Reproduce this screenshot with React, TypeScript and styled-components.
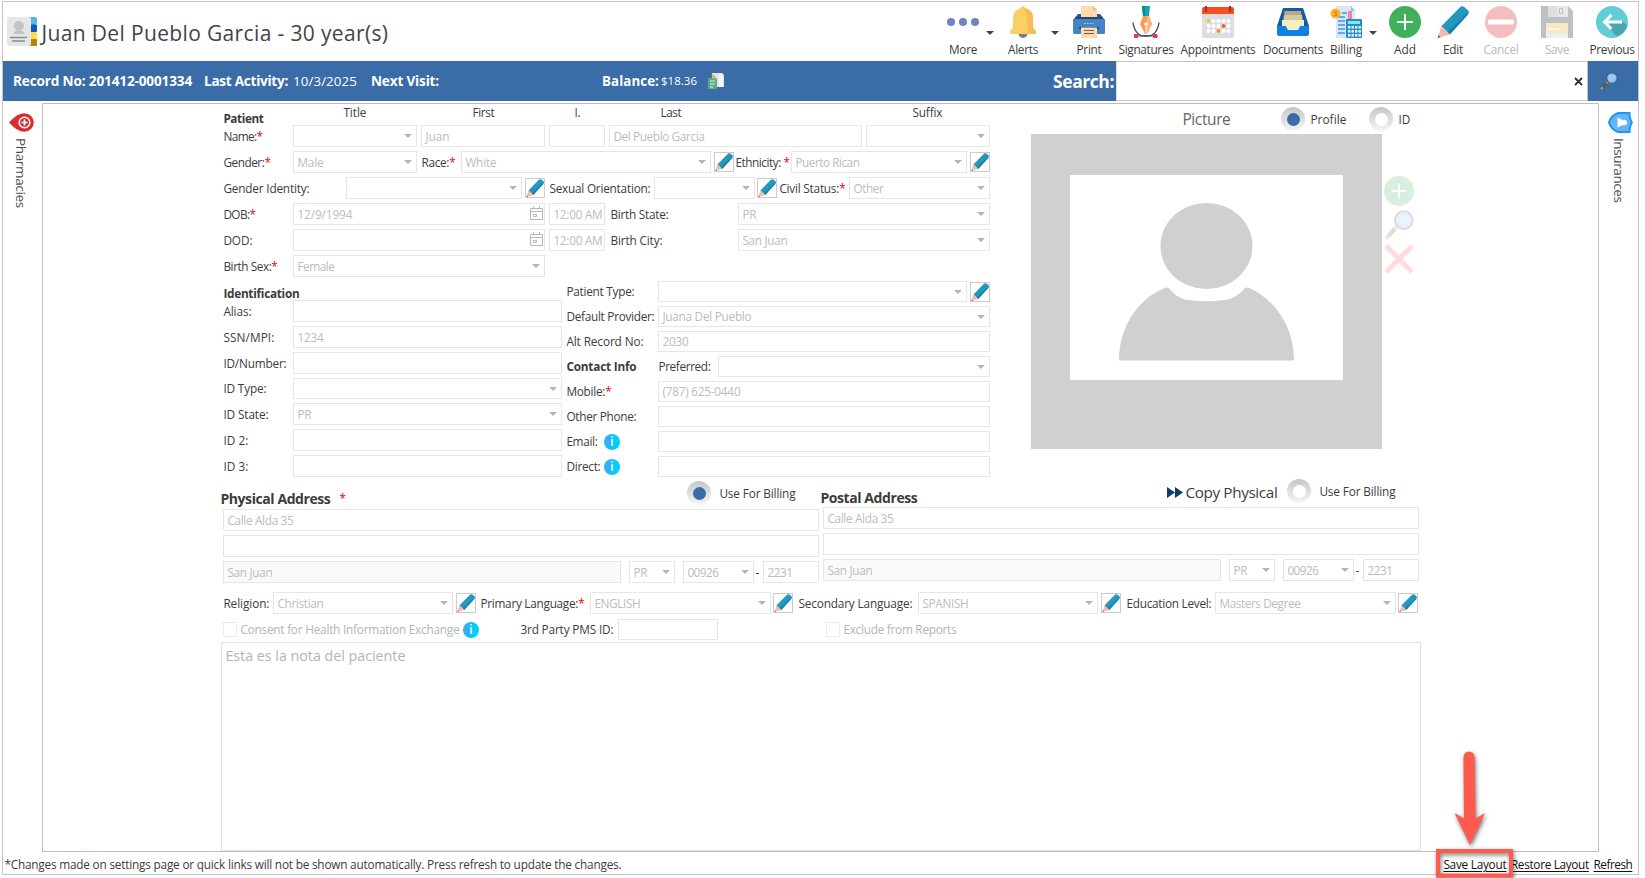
import React, { useLayoutEffect, useRef, useState } from "react";
import styled, { createGlobalStyle } from "styled-components";

const Global = createGlobalStyle`
  * { box-sizing: border-box; }
  body { margin: 0; background: #fff; overflow: hidden; }
  body, input, button { font-family: "Open Sans", "Noto Sans", sans-serif; }
`;

/* ---------- text ---------- */

const TextSpan = styled.span<{ $size: number; $bold?: boolean; $color: string; $underline?: boolean }>`
  display: inline-block;
  flex: none;
  margin-left: -0.6px;
  margin-right: 0.6px;
  white-space: pre;
  font-size: ${(p) => p.$size}px;
  line-height: 16px;
  font-weight: ${(p) => (p.$bold ? 700 : 400)};
  color: ${(p) => p.$color};
  text-decoration: ${(p) => (p.$underline ? "underline" : "none")};
  text-underline-offset: 2px;
`;

const Star = styled.span`
  color: #f00000;
`;

type TextProps = {
  w: number;
  size?: number;
  bold?: boolean;
  color?: string;
  underline?: boolean;
  children: React.ReactNode;
};

/* Tracks a caption in or out so that it fills the width reserved for it. */
function Text({ w, size = 11.8, bold, color = "#3c3c3c", underline, children }: TextProps) {
  const ref = useRef<HTMLSpanElement>(null);
  const [spacing, setSpacing] = useState(0);
  useLayoutEffect(() => {
    const el = ref.current;
    if (!el) return;
    el.style.letterSpacing = "0px";
    const n = (el.textContent || "").length || 1;
    setSpacing((w - el.getBoundingClientRect().width) / n);
  }, [w, size]);
  return (
    <TextSpan ref={ref} $size={size} $bold={bold} $color={color} $underline={underline} style={{ letterSpacing: `${spacing}px` }}>
      {children}
    </TextSpan>
  );
}

/* ---------- form parts ---------- */

const Row = styled.div<{ $h?: number }>`
  display: flex;
  align-items: center;
  height: ${(p) => p.$h ?? 22}px;
  margin-bottom: 4px;
  ${TextSpan} { margin-top: ${(p) => (p.$h === 21 ? -1 : 0)}px; }
`;

const Slot = styled.div<{ $w?: number; $ml?: number; $mt?: number }>`
  flex: none;
  display: flex;
  align-items: center;
  width: ${(p) => (p.$w ? `${p.$w}px` : "auto")};
  margin-left: ${(p) => p.$ml ?? 0}px;
  margin-top: ${(p) => p.$mt ?? 0}px;
`;

const Box = styled.div<{ $w: number; $ml?: number; $shade?: boolean }>`
  flex: none;
  align-self: stretch;
  display: flex;
  align-items: center;
  justify-content: space-between;
  width: ${(p) => p.$w}px;
  margin-left: ${(p) => p.$ml ?? 0}px;
  padding: 0 4px;
  border: 1px solid #e6e6e6;
  background: ${(p) => (p.$shade ? "#fafafa" : "#fff")};
`;

const Caret = styled.i<{ $dark?: boolean }>`
  flex: none;
  margin-left: auto;
  border: 4px solid transparent;
  border-bottom: 0;
  border-top-color: ${(p) => (p.$dark ? "#444" : "#b4b4b4")};
`;

type FieldProps = { w: number; ml?: number; v?: string; vw?: number; sel?: boolean; cal?: boolean; shade?: boolean };

function Field({ w, ml, v, vw = 0, sel, cal, shade }: FieldProps) {
  return (
    <Box $w={w} $ml={ml} $shade={shade}>
      {v && <Text w={vw} color="#bcbcbc">{v}</Text>}
      {sel && <Caret />}
      {cal && <CalendarGlyph />}
    </Box>
  );
}

const CalSvg = styled.svg`
  flex: none;
  margin: 0 -3px 2px auto;
`;

const CalendarGlyph = () => (
  <CalSvg width="13" height="14" viewBox="0 0 13 14" fill="none" stroke="#b8b8b8">
    <path d="M.5 2.5h12v11H.5zM.5 5.5h12M3.5 0v3M9.500 0v3M3.500 8.500h3v2h-3z" />
  </CalSvg>
);

const Label = ({ w, slot, ml, bold, star, children }: { w: number; slot?: number; ml?: number; bold?: boolean; star?: string; children: string }) => (
  <Slot $w={slot} $ml={ml}>
    <Text w={w} bold={bold}>
      {children}
      {star && <Star>{star}</Star>}
    </Text>
  </Slot>
);

const PencilButton = styled.div<{ $ml?: number; $w?: number }>`
  flex: none;
  width: ${(p) => p.$w ?? 20}px;
  height: 20px;
  margin-left: ${(p) => p.$ml ?? 3}px;
  border: 1px solid #ccc;
  display: flex;
  align-items: center;
  justify-content: flex-start;
`;

const Pencil = ({ size }: { size: number }) => (
  <svg width={size} height={size} viewBox="0 0 32 32">
    <path d="M22.500 1.800Q24.800-.6 27.300 1L31 4.200Q33 6.300 30.700 8.800L12.700 28.600 4.300 20.300z" fill="#2497bf" />
    <path d="M30 7.500L31 8.500 12.700 28.600 10.300 26.200z" fill="#177fa6" />
    <path d="M4.500 20L13 28.400.6 32z" fill="#f6b9ab" />
    <path d="M1.600 29.300L3.600 31.200.6 32z" fill="#5a5460" />
  </svg>
);

const Edit = ({ ml, w }: { ml?: number; w?: number }) => (
  <PencilButton $ml={ml} $w={w}>
    <Pencil size={18} />
  </PencilButton>
);

const Info = styled.div<{ $ml?: number }>`
  flex: none;
  width: 16px;
  height: 16px;
  margin-left: ${(p) => p.$ml ?? 0}px;
  border-radius: 50%;
  background: linear-gradient(100deg, #2fb2f2 0 40%, #00ccff 60%);
  color: #fff;
  font: 600 12px/15px "Open Sans", sans-serif;
  text-align: center;
`;

const Radio = styled.div<{ $on?: boolean; $ml?: number; $mt?: number }>`
  flex: none;
  width: 24px;
  height: 24px;
  margin-left: ${(p) => p.$ml ?? 0}px;
  margin-top: ${(p) => p.$mt ?? 0}px;
  border-radius: 50%;
  background: linear-gradient(#c6c6c6, #f6f6f6);
  display: flex;
  align-items: center;
  justify-content: center;
  &::before {
    content: "";
    width: 13px;
    height: 13px;
    border-radius: 50%;
    background: ${(p) => (p.$on ? "#3a6ca8" : "#fff")};
  }
`;

const Check = styled.div<{ $ml?: number }>`
  flex: none;
  width: 14px;
  height: 15px;
  margin-left: ${(p) => p.$ml ?? 0}px;
  border: 1px solid #ececec;
`;

/* ---------- page frame ---------- */

const Page = styled.div`
  width: 1645px;
  height: 878px;
  padding: 1px 0 0 2px;
`;

const Frame = styled.div`
  position: relative;
  width: 1637px;
  height: 874px;
  border: 1px solid #c4c4c4;
  display: flex;
  flex-direction: column;
`;

const Header = styled.header`
  flex: none;
  height: 59px;
  display: flex;
  align-items: flex-start;
`;

const Title = styled.h1`
  margin: 0;
  width: 901px;
  padding: 15px 0 0 4px;
  font-weight: 400;
  line-height: 0;
  display: flex;
  align-items: center;
  gap: 5px;
`;

const TitleText = styled.div`
  display: flex;
  align-items: center;
  height: 30px;
  padding-top: 2px;
`;

const Tool = styled.div<{ $w: number; $ml?: number; $off?: boolean }>`
  flex: none;
  width: ${(p) => p.$w}px;
  margin-left: ${(p) => p.$ml ?? 0}px;
  padding-top: 4px;
  display: flex;
  flex-direction: column;
  align-items: center;
  gap: 3px;
  > svg { opacity: ${(p) => (p.$off ? 0.38 : 1)}; }
  ${TextSpan} { margin-left: 0; margin-right: 0; }
`;

const ToolCaret = styled.div`
  flex: none;
  width: 14px;
  padding: 29px 3px 0;
  display: flex;
`;

const BlueBar = styled.div`
  flex: none;
  height: 40px;
  display: flex;
  align-items: center;
  padding-left: 10px;
  background: #3a6ca8;
  ${TextSpan} { margin-left: 0; margin-right: 0; }
`;

const SearchBox = styled.div`
  flex: none;
  align-self: stretch;
  width: 472px;
  margin-left: 2px;
  border: 1px solid #c4c4c4;
  border-left-color: #dadada;
  background: #fff;
  display: flex;
  align-items: center;
  justify-content: flex-end;
  padding-right: 4px;
`;

const Body = styled.div`
  flex: none;
  height: 751px;
  padding-top: 2px;
  display: flex;
`;

const Side = styled.aside<{ $w: number }>`
  flex: none;
  width: ${(p) => p.$w}px;
  padding-top: 7px;
  display: flex;
  flex-direction: column;
  align-items: center;
`;

const Vertical = styled.div<{ $left?: boolean }>`
  margin-top: ${(p) => (p.$left ? 6 : 5)}px;
  margin-right: ${(p) => (p.$left ? 3 : 0)}px;
  writing-mode: vertical-rl;
  font: 13.500px/18px "Open Sans", sans-serif;
  letter-spacing: ${(p) => (p.$left ? -0.35 : -0.4)}px;
  color: #505050;
`;

const Panel = styled.main`
  flex: none;
  width: 1557px;
  height: 749px;
  border: 1px solid #bdbdbd;
  padding-left: 178px;
`;

const Top = styled.div`
  display: flex;
  height: 373px;
`;

const Patient = styled.section`
  width: 769px;
  padding-left: 3px;
  flex: none;
`;

const HeadRow = styled.div`
  display: flex;
  align-items: flex-start;
  height: 21px;
`;

const Columns = styled.div`
  display: flex;
`;

const Column = styled.div<{ $w: number; $ml?: number }>`
  flex: none;
  width: ${(p) => p.$w}px;
  margin-left: ${(p) => p.$ml ?? 0}px;
`;

const SubHead = styled.div`
  display: flex;
  align-items: flex-start;
  height: 19px;
  padding-top: 4px;
`;

const PictureArea = styled.section`
  margin-left: 41px;
  width: 384px;
`;

const PictureHead = styled.div`
  display: flex;
  align-items: center;
  height: 30px;
  padding-left: 152px;
`;

const Photo = styled.div`
  width: 351px;
  height: 315px;
  padding: 41px 39px 69px 39px;
  background: #d0d0d0;
`;

const PhotoTools = styled.div`
  display: flex;
  flex-direction: column;
  align-items: center;
  padding: 42px 0 0 2px;
  gap: 4px;
  opacity: 0.2;
`;

const Address = styled.section<{ $ml?: number }>`
  width: 596px;
  flex: none;
  margin-left: ${(p) => p.$ml ?? 2}px;
`;

const AddressHead = styled.div<{ $h: number }>`
  display: flex;
  align-items: flex-start;
  height: ${(p) => p.$h}px;
  margin-left: -2px;
`;

const Addresses = styled.div`
  display: flex;
  height: 115px;
`;

const Details = styled.div<{ $h: number; $mb: number; $pl: number }>`
  display: flex;
  align-items: center;
  height: ${(p) => p.$h}px;
  margin-bottom: ${(p) => p.$mb}px;
  padding-left: ${(p) => p.$pl}px;
  ${TextSpan} { margin-top: ${(p) => (p.$h === 21 ? -1 : 0)}px; }
`;

const Note = styled.div`
  display: flex;
  align-items: flex-start;
  width: 1200px;
  height: 209px;
  border: 1px solid #e2e2e2;
  padding: 5px 4px;
`;

const Footer = styled.footer`
  flex: 1;
  display: flex;
  align-items: center;
  padding: 2px 5px 0 2px;
`;

const Links = styled.nav`
  margin-left: auto;
  display: flex;
  gap: 4.500px;
`;

const Callout = styled.svg`
  position: absolute;
  left: 1427px;
  top: 744px;
  overflow: visible;
`;

const Marker = styled.g`
  fill: #ff5a4c;
  filter: drop-shadow(1px 2px 2px rgba(0, 0, 0, 0.55));
`;

/* ---------- drawings ---------- */

const ContactIcon = () => (
  <svg width="30" height="30" viewBox="0 0 30 30">
    <rect x="22" y="0" width="8" height="8" rx="2" fill="#5bb4e5" />
    <rect x="22" y="7.500" width="8" height="7.500" rx="1" fill="#0c5cb5" />
    <rect x="22" y="15" width="8" height="7" rx="1" fill="#ffdb4d" />
    <rect x="22" y="22" width="8" height="7" rx="1" fill="#b58600" />
    <rect width="24" height="29" rx="2" fill="#e6e6e8" />
    <circle cx="12" cy="9" r="5" fill="#c0c5ca" />
    <path d="M6 17q1-3 4-3.500h4q3 .5 4 3.500z" fill="#c0c5ca" />
    <path d="M3 20.500h17M5 24h13" stroke="#868d94" strokeWidth="1.500" />
  </svg>
);

const MoreIcon = () => (
  <svg width="32" height="32" viewBox="0 0 32 32" fill="#7383bf">
    <circle cx="4" cy="16" r="4" /><circle cx="16" cy="16" r="4" /><circle cx="28" cy="16" r="4" />
  </svg>
);

const BellIcon = () => (
  <svg width="32" height="32" viewBox="0 0 32 32">
    <path d="M11 26h10a5 6 0 0 1-10 0z" fill="#71808f" />
    <path d="M16 0q2 0 2 2 8 1.500 8 11v8q0 2 3 4v3H3v-3q3-2 3-4v-8q0-9.500 8-11 0-2 2-2z" fill="#fbcf63" />
    <path d="M17 2q9 1.500 9 11v8q0 2 3 4v3h-8q-1-4-1-12 0-9-3-14z" fill="#f4bd55" />
  </svg>
);

const PrintIcon = () => (
  <svg width="32" height="32" viewBox="0 0 32 32">
    <path d="M5 8h22l5 6v3H0v-3z" fill="#2c5a85" />
    <rect y="13" width="32" height="15" rx="1.500" fill="#4583c4" />
    <path d="M8 0h12l4 4v9H8z" fill="#ffd9b0" /><path d="M20 0v4h4z" fill="#e6b98e" />
    <path d="M3 13h26v-2H3z" fill="#24496e" />
    <path d="M11 17.500h10" stroke="#a5c7ea" strokeDasharray="2 1" />
    <path d="M6 22h20" stroke="#24496e" strokeWidth="2" />
    <path d="M8 21.500h16V32H8z" fill="#ffd9b0" /><path d="M11 24.500h10M11 27.500h10" stroke="#6f5b4b" />
  </svg>
);

const SignIcon = () => (
  <svg width="32" height="32" viewBox="0 0 32 32">
    <path d="M3 16.500Q5 30 15 30h2q10 0 12-13.500" fill="none" stroke="#34465a" strokeWidth="1.300" />
    <path d="M4 30h24" stroke="#34465a" />
    <path d="M12 0h8l-1 10h-6z" fill="#14a3b4" /><path d="M12 0h3v10h-2z" fill="#0a8798" />
    <path d="M13 10h6l3 8-5 10h-2l-5-10z" fill="#fb9851" /><path d="M17 10h2l3 8-5 10h-1z" fill="#fdb67e" />
    <path d="M16 20v8" stroke="#fff" /><circle cx="16" cy="18" r="1.700" fill="#fff" />
    <path d="M4 28h4v4H4zM23 28h4v4h-4z" fill="#e63946" />
  </svg>
);

const ApptIcon = () => (
  <svg width="32" height="32" viewBox="0 0 32 32">
    <rect y="1" width="32" height="31" rx="2" fill="#dcdee3" />
    <path d="M0 8V3q0-2 2-2h28q2 0 2 2v5z" fill="#fc4f20" />
    <path d="M4 1v4M28 1v4" stroke="#8d3b35" strokeWidth="2.400" strokeLinecap="round" />
    {[15, 20, 25].map((y) => [6.500, 11.500, 16.500, 21.500, 26.500].map((x) => <circle key={`${x}-${y}`} cx={x} cy={y} r="2" fill="#fff" />))}
    <circle cx="6.500" cy="15" r="2" fill="#fcc419" /><circle cx="21.500" cy="20" r="2" fill="#fa5430" /><circle cx="16.500" cy="25" r="2" fill="#f99312" />
  </svg>
);

const DocsIcon = () => (
  <svg width="32" height="32" viewBox="0 0 32 32">
    <path d="M6 2h20l6 18H0z" fill="#115ea3" />
    <path d="M7.500 5h16.500l1 7H7z" fill="#b9a880" /><path d="M7 9h18l1 8H6z" fill="#dbc79c" />
    <path d="M5 14h22v9H5z" fill="#f5edc5" />
    <path d="M0 20h9q1 4 3 4h8q2 0 3-4h9v8q0 2-2 2H2q-2 0-2-2z" fill="#1180e0" />
  </svg>
);

const BillIcon = () => (
  <svg width="32" height="32" viewBox="0 0 32 32">
    <path d="M6 0h15l4 4v28H6z" fill="#d3e8fb" /><path d="M21 0l4 5h-4z" fill="#98bfe8" />
    <path d="M8 11h7M8 15h7M8 19h7M8 23h7M8 27h7M12 7h5" stroke="#4a90e2" strokeWidth="1.500" />
    <path d="M18 5h4v8h-4z" fill="#f183a8" />
    <circle cx="5.500" cy="7.500" r="5" fill="#fbb225" /><path d="M7 5.500H5v2h2v2H4.500" stroke="#e07c12" fill="none" />
    <rect x="16" y="13" width="16" height="19" rx="1" fill="#1f8fc5" />
    <path d="M18 15h12v3H18z" fill="#8ee0f5" />
    {[20, 24, 28].map((y) => [18, 21.500, 25, 28.500].map((x) => <rect key={`${x}-${y}`} x={x} y={y} width="2.400" height="2.600" fill="#e8f6ff" />))}
  </svg>
);

const AddIcon = ({ size = 32 }: { size?: number }) => (
  <svg width={size} height={size} viewBox="0 0 32 32">
    <circle cx="16" cy="16" r="16" fill="#3fb15a" /><path d="M16 8v16M8 16h16" stroke="#fff" strokeWidth="2" />
  </svg>
);

const CancelIcon = () => (
  <svg width="32" height="32" viewBox="0 0 32 32">
    <circle cx="16" cy="16" r="16" fill="#e9545d" /><rect x="3" y="13.500" width="26" height="5" rx="1.500" fill="#fff" />
  </svg>
);

const SaveIcon = () => (
  <svg width="32" height="32" viewBox="0 0 32 32">
    <path d="M0 0h27l5 5v27H0z" fill="#555b6a" /><path d="M7 0h20v11H7z" fill="#bfc6cf" />
    <path d="M7 0h9v11H7z" fill="#a8afb8" />
    <path d="M18.500 2.500h3v5h-3z" stroke="#555b6a" fill="none" />
    <path d="M5 17h22v15H5z" fill="#f4c35c" /><path d="M5 27h22v5H5z" fill="#cfd3d8" /><path d="M8 23h10" stroke="#fff" strokeWidth="1.500" />
  </svg>
);

const BackIcon = () => (
  <svg width="32" height="32" viewBox="0 0 32 32">
    <circle cx="16" cy="16" r="16" fill="#62cdd6" />
    <path d="M8.500 17.500L21 30.500Q29 27 31.500 19L25 15z" fill="#4aa6b3" />
    <path d="M26 16H8.500M15.500 9L8.500 16l7 7" fill="none" stroke="#fff" strokeWidth="3" />
  </svg>
);

const Magnifier = ({ size }: { size: number }) => (
  <svg width={size} height={size} viewBox="0 0 28 28">
    <path d="M2 26.500L10.500 17" stroke="#555" strokeWidth="4" /><path d="M1.500 26.500l3-2.500M10 17.500l2-2" stroke="#b5a44a" strokeWidth="3" />
    <circle cx="18.500" cy="9.500" r="8.300" fill="#8fc3fb" stroke="#505a66" strokeWidth="2" />
    <path d="M14 11l6-6M17 13l6-6" stroke="#bcdcff" />
  </svg>
);

const MoneyIcon = () => (
  <svg width="18" height="18" viewBox="0 0 18 18">
    <path d="M5 1h10l2 2v12H5z" fill="#d8e6ef" /><path d="M12 2h4v13h-4z" fill="#f5f8fa" />
    <rect x="1" y="6" width="9" height="11" rx="1" fill="#58ad7d" /><path d="M3 9h5M3 12h5M3 15h3" stroke="#d9f3e3" />
    <path d="M5 3l4 4" stroke="#e8a84d" strokeWidth="2" />
  </svg>
);

const PharmacyIcon = () => (
  <svg width="25" height="19" viewBox="0 0 25 19">
    <path d="M0 9.500Q8 .3 15.500.2a9.300 9.300 0 0 1 0 18.600Q8 18.700 0 9.500z" fill="#d52f32" />
    <circle cx="15.500" cy="9.500" r="5.300" fill="none" stroke="#fff" strokeWidth="1.500" />
    <path d="M15.500 6.500v6M12.500 9.500h6" stroke="#fff" strokeWidth="1.700" />
  </svg>
);

const InsuranceIcon = () => (
  <svg width="25" height="21" viewBox="0 0 25 21">
    <path d="M1 10.500Q3 3.500 10 1h11.500Q21 5 23.800 10.500 21 16 21.500 20H10Q3 17.500 1 10.500z" fill="#64b5f6" stroke="#2196f3" strokeWidth="2" />
    <path d="M9.500 5.500l5 2.500q4.500-1 4.500 2.500t-4.500 2.500l-5 2.500z" fill="#fff" />
  </svg>
);

const Avatar = () => (
  <svg width="273" height="205" viewBox="0 0 273 205">
    <rect width="273" height="205" fill="#fff" />
    <ellipse cx="136.500" cy="71" rx="46" ry="43" fill="#d0d0d0" />
    <path d="M49 185.500C49 148 72 122 94.500 113q3-1.500 6 2C108 124 116 126 136.500 126S165 124 173 115q3-3.500 6-2C201 122 224 148 224 185.500z" fill="#d0d0d0" />
  </svg>
);

/* ---------- sections ---------- */

const tools: { label: string; lw: number; w: number; ml?: number; icon: React.ReactNode; caret?: boolean; off?: boolean; caretGap?: number }[] = [
  { label: "More", lw: 28, w: 40, ml: 39, icon: <MoreIcon />, caret: true },
  { label: "Alerts", lw: 30, w: 40, ml: 6, icon: <BellIcon />, caret: true, caretGap: 5 },
  { label: "Print", lw: 25, w: 40, ml: 7, icon: <PrintIcon /> },
  { label: "Signatures", lw: 55, w: 60, ml: 7, icon: <SignIcon /> },
  { label: "Appointments", lw: 75, w: 80, ml: 2, icon: <ApptIcon /> },
  { label: "Documents", lw: 60, w: 66, ml: 2, icon: <DocsIcon /> },
  { label: "Billing", lw: 32, w: 40, icon: <BillIcon />, caret: true },
  { label: "Add", lw: 22, w: 40, ml: 5, icon: <AddIcon /> },
  { label: "Edit", lw: 20, w: 40, ml: 8, icon: <Pencil size={32} /> },
  { label: "Cancel", lw: 35, w: 44, ml: 6, icon: <CancelIcon />, off: true },
  { label: "Save", lw: 24, w: 40, ml: 14, icon: <SaveIcon />, off: true },
  { label: "Previous", lw: 45, w: 50, ml: 10, icon: <BackIcon /> },
];

const CaretSlot = styled.div<{ $ml?: number }>`
  flex: none;
  margin-left: ${(p) => p.$ml ?? 0}px;
`;

const AddressLines = () => (
  <>
    <Row><Field w={596} v="Calle Alda 35" vw={66} /></Row>
    <Row><Field w={596} /></Row>
    <Row>
      <Field w={398} v="San Juan" vw={45} shade />
      <Field w={46} ml={8} v="PR" vw={14} sel />
      <Field w={71} ml={8} v="00926" vw={31} sel />
      <Slot $w={5} $ml={2}><Text w={5}>-</Text></Slot>
      <Field w={56} ml={2} v="2231" vw={25} />
    </Row>
  </>
);

export default function App() {
  return (
    <Page>
      <Global />
      <Frame>
        <Header>
          <Title>
            <ContactIcon />
            <TitleText><Text w={347} size={21} color="#444">Juan Del Pueblo Garcia - 30 year(s)</Text></TitleText>
          </Title>
          {tools.map((t) => (
            <React.Fragment key={t.label}>
              <Tool $w={t.w} $ml={t.ml} $off={t.off}>
                {t.icon}
                <Text w={t.lw} color={t.off ? "#b9b9b9" : "#3c3c3c"}>{t.label}</Text>
              </Tool>
              {t.caret && <CaretSlot $ml={t.caretGap}><ToolCaret><Caret $dark /></ToolCaret></CaretSlot>}
            </React.Fragment>
          ))}
        </Header>

        <BlueBar>
          <Text w={179} size={13.600} bold color="#fff">Record No: 201412-0001334</Text>
          <Slot $ml={12}><Text w={84} size={13.600} bold color="#fff">Last Activity:</Text></Slot>
          <Slot $ml={5}><Text w={64} size={13.300} color="#fff">10/3/2025</Text></Slot>
          <Slot $ml={14}><Text w={68} size={13.600} bold color="#fff">Next Visit:</Text></Slot>
          <Slot $ml={163}><Text w={57} size={13.300} bold color="#fff">Balance:</Text></Slot>
          <Slot $ml={2}><Text w={36} size={11.500} color="#fff">$18.36</Text></Slot>
          <Slot $ml={10}><MoneyIcon /></Slot>
          <Slot $ml={328}><Text w={61} size={17.500} bold color="#fff">Search:</Text></Slot>
          <SearchBox>
            <svg width="9" height="9" viewBox="0 0 9 9"><path d="M1 1l7 7M8 1L1 8" stroke="#333" strokeWidth="1.800" /></svg>
          </SearchBox>
          <Slot $ml={12}><Magnifier size={18} /></Slot>
        </BlueBar>

        <Body>
          <Side $w={39}>
            <Slot $ml={-2} $mt={3}><PharmacyIcon /></Slot>
            <Vertical $left>Pharmacies</Vertical>
          </Side>
          <Panel>
            <Top>
              <Patient>
                <HeadRow>
                  <Slot $w={120} $mt={6}><Text w={40} bold>Patient</Text></Slot>
                  <Slot $w={129}><Text w={23}>Title</Text></Slot>
                  <Slot $w={102}><Text w={22}>First</Text></Slot>
                  <Slot $w={86}><Text w={6}>I.</Text></Slot>
                  <Slot $w={252}><Text w={21}>Last</Text></Slot>
                  <Slot><Text w={30}>Suffix</Text></Slot>
                </HeadRow>
                <Row>
                  <Label slot={69} w={39} star="*">Name:</Label>
                  <Field w={124} sel />
                  <Field w={124} ml={4} v="Juan" vw={24} />
                  <Field w={56} ml={4} />
                  <Field w={253} ml={4} v="Del Pueblo Garcia" vw={91} />
                  <Field w={124} ml={4} sel />
                </Row>
                <Row>
                  <Label slot={69} w={47} star="*">Gender:</Label>
                  <Field w={124} v="Male" vw={26} sel />
                  <Label slot={39} ml={5} w={34} star="*">Race:</Label>
                  <Field w={250} v="White" vw={31} sel />
                  <Edit w={20} />
                  <Label slot={55} ml={2} w={54} star=" *">Ethnicity:</Label>
                  <Field w={176} v="Puerto Rican" vw={64} sel />
                  <Edit />
                </Row>
                <Row>
                  <Label slot={122} w={86}>Gender Identity:</Label>
                  <Field w={176} sel />
                  <Edit />
                  <Label slot={104} ml={5} w={101}>Sexual Orientation:</Label>
                  <Field w={101} sel />
                  <Edit ml={2} />
                  <Label slot={69} ml={3} w={66} star="*">Civil Status:</Label>
                  <Field w={141} v="Other" vw={30} sel />
                </Row>
                <Row>
                  <Label slot={69} w={32} star="*">DOB:</Label>
                  <Field w={252} v="12/9/1994" vw={55} cal />
                  <Field w={56} ml={4} v="12:00 AM" vw={49} />
                  <Label slot={127} ml={6} w={58}>Birth State:</Label>
                  <Field w={252} v="PR" vw={14} sel />
                </Row>
                <Row>
                  <Label slot={69} w={29}>DOD:</Label>
                  <Field w={252} cal />
                  <Field w={56} ml={4} v="12:00 AM" vw={49} />
                  <Label slot={127} ml={6} w={52}>Birth City:</Label>
                  <Field w={252} v="San Juan" vw={45} sel />
                </Row>
                <Row>
                  <Label slot={69} w={54} star="*">Birth Sex:</Label>
                  <Field w={252} v="Female" vw={37} sel />
                </Row>
                <Columns>
                  <Column $w={338}>
                    <SubHead><Text w={76} bold>Identification</Text></SubHead>
                    <Row><Label slot={69} w={28}>Alias:</Label><Field w={269} /></Row>
                    <Row><Label slot={69} w={51}>SSN/MPI:</Label><Field w={269} v="1234" vw={26} /></Row>
                    <Row><Label slot={69} w={63}>ID/Number:</Label><Field w={269} /></Row>
                    <Row $h={21}><Label slot={69} w={43}>ID Type:</Label><Field w={269} sel /></Row>
                    <Row><Label slot={69} w={45}>ID State:</Label><Field w={269} v="PR" vw={14} sel /></Row>
                    <Row><Label slot={69} w={25}>ID 2:</Label><Field w={269} /></Row>
                    <Row><Label slot={69} w={25}>ID 3:</Label><Field w={269} /></Row>
                  </Column>
                  <Column $w={423} $ml={5}>
                    <Row $h={21}><Label slot={91} w={68}>Patient Type:</Label><Field w={309} sel /><Edit /></Row>
                    <Row $h={21}><Label slot={91} w={88}>Default Provider:</Label><Field w={332} v="Juana Del Pueblo" vw={89} sel /></Row>
                    <Row $h={21}><Label slot={91} w={77}>Alt Record No:</Label><Field w={332} v="2030" vw={26} /></Row>
                    <Row $h={21}>
                      <Label slot={92} w={70} bold>Contact Info</Label>
                      <Label slot={59} w={52}>Preferred:</Label>
                      <Field w={272} sel />
                    </Row>
                    <Row $h={21}><Label slot={91} w={45} star="*">Mobile:</Label><Field w={332} v="(787) 625-0440" vw={78} /></Row>
                    <Row $h={21}><Label slot={91} w={70}>Other Phone:</Label><Field w={332} /></Row>
                    <Row $h={21}><Label slot={37} w={31}>Email:</Label><Info>i</Info><Field w={332} ml={38} /></Row>
                    <Row $h={21}><Label slot={37} w={34}>Direct:</Label><Info>i</Info><Field w={332} ml={38} /></Row>
                  </Column>
                </Columns>
              </Patient>

              <PictureArea>
                <PictureHead>
                  <Text w={48} size={15.500} color="#666">Picture</Text>
                  <Radio $on $ml={50} />
                  <Slot $ml={6}><Text w={36}>Profile</Text></Slot>
                  <Radio $ml={22} />
                  <Slot $ml={6}><Text w={12}>ID</Text></Slot>
                </PictureHead>
                <Columns>
                  <Photo><Avatar /></Photo>
                  <PhotoTools>
                    <AddIcon size={30} />
                    <Magnifier size={30} />
                    <svg width="30" height="30" viewBox="0 0 30 30"><path d="M2 2l26 26M28 2L2 28" stroke="#ff5050" strokeWidth="5" /></svg>
                  </PhotoTools>
                </Columns>
              </PictureArea>
            </Top>

            <Addresses>
              <Address>
                <AddressHead $h={32}>
                  <Slot $w={119} $mt={14}><Text w={110} size={14} bold>Physical Address</Text></Slot>
                  <Slot $w={347} $mt={13}><Text w={6}><Star>*</Star></Text></Slot>
                  <Radio $on $mt={4} />
                  <Slot $ml={9} $mt={8}><Text w={76}>Use For Billing</Text></Slot>
                </AddressHead>
                <AddressLines />
              </Address>
              <Address $ml={4}>
                <AddressHead $h={30}>
                  <Slot $w={346} $mt={13}><Text w={97} size={14} bold>Postal Address</Text></Slot>
                  <Slot $mt={10}>
                    <svg width="16" height="11" viewBox="0 0 16 11"><path d="M0 0l8 5.500L0 11zM8 0l8 5.500L8 11z" fill="#123a6b" /></svg>
                  </Slot>
                  <Slot $ml={3} $mt={7}><Text w={92} size={15.300}>Copy Physical</Text></Slot>
                  <Radio $ml={9} $mt={2} />
                  <Slot $ml={9} $mt={6}><Text w={76}>Use For Billing</Text></Slot>
                </AddressHead>
                <AddressLines />
              </Address>
            </Addresses>

            <Details $h={22} $mb={5} $pl={3}>
              <Label slot={49} w={46}>Religion:</Label>
              <Field w={180} v="Christian" vw={46} sel />
              <Edit />
              <Label slot={109} ml={5} w={104} star="*">Primary Language:</Label>
              <Field w={181} v="ENGLISH" vw={46} sel />
              <Edit ml={2} />
              <Label slot={119} ml={6} w={114}>Secondary Language:</Label>
              <Field w={180} v="SPANISH" vw={46} sel />
              <Edit />
              <Label slot={88} ml={6} w={85}>Education Level:</Label>
              <Field w={181} v="Masters Degree" vw={81} sel />
              <Edit ml={2} />
            </Details>
            <Details $h={21} $mb={2} $pl={2}>
              <Check />
              <Slot $ml={4}><Text w={219} color="#b4b4b4">Consent for Health Information Exchange</Text></Slot>
              <Info $ml={3}>i</Info>
              <Label slot={97} ml={42} w={93}>3rd Party PMS ID:</Label>
              <Field w={100} />
              <Check $ml={108} />
              <Slot $ml={4}><Text w={113} color="#b4b4b4">Exclude from Reports</Text></Slot>
            </Details>
            <Note><Text w={180} size={14.300} color="#b4b4b4">Esta es la nota del paciente</Text></Note>
          </Panel>
          <Side $w={39}>
            <Slot $ml={4} $mt={2}><InsuranceIcon /></Slot>
            <Vertical>Insurances</Vertical>
          </Side>
        </Body>

        <Footer>
          <Text w={617}>*Changes made on settings page or quick links will not be shown automatically. Press refresh to update the changes.</Text>
          <Links>
            <Text w={63} color="#111" underline>Save Layout</Text>
            <Text w={78} color="#111" underline>Restore Layout</Text>
            <Text w={39} color="#111" underline>Refresh</Text>
          </Links>
        </Footer>

        <Callout width="90" height="134" viewBox="1430 746 90 134">
          <Marker>
            <path d="M1463.500 757a5.500 5.500 0 0 1 11 0l1 61.500 9.500-5.500-15 32-15.500-32 9.500 5.500z" />
            <path fillRule="evenodd" d="M1436 849h77v28.500h-77zM1440 853v20.500h69V853z" />
          </Marker>
        </Callout>
      </Frame>
    </Page>
  );
}
